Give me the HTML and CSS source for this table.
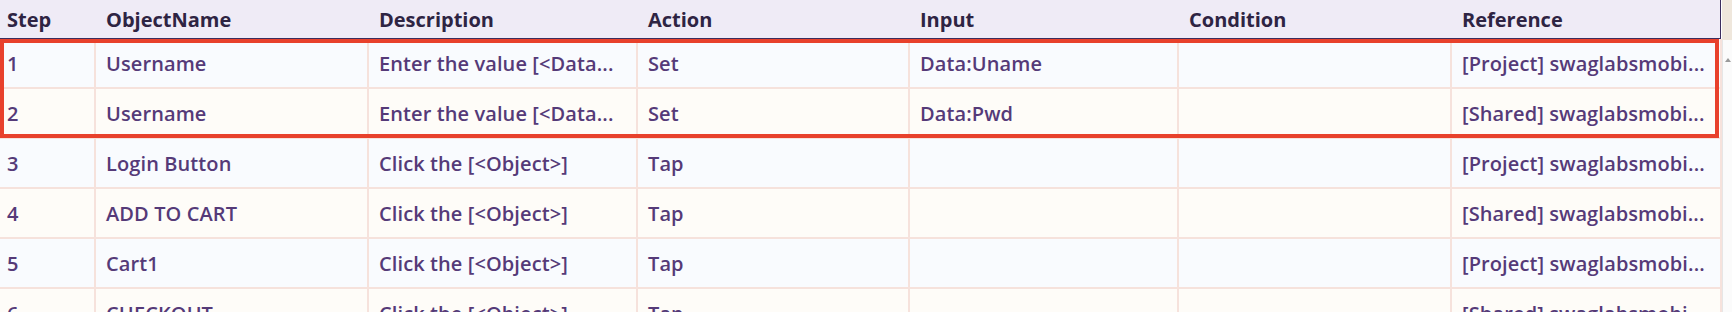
FILE: index.html
```html
<!DOCTYPE html>
<html>
<head>
<meta charset="utf-8">
<link rel="stylesheet" href="styles.css">
</head>
<body>
<div class="page">
  <div class="grid-wrap">
    <div class="grid">
      <div class="row head">
        <div class="cell c-step">Step</div>
        <div class="cell">ObjectName</div>
        <div class="cell">Description</div>
        <div class="cell">Action</div>
        <div class="cell">Input</div>
        <div class="cell">Condition</div>
        <div class="cell">Reference</div>
      </div>
      <div class="row odd">
        <div class="cell c-step">1</div>
        <div class="cell">Username</div>
        <div class="cell">Enter the value [&lt;Data...</div>
        <div class="cell">Set</div>
        <div class="cell">Data:Uname</div>
        <div class="cell"></div>
        <div class="cell">[Project] swaglabsmobi...</div>
      </div>
      <div class="row even">
        <div class="cell c-step">2</div>
        <div class="cell">Username</div>
        <div class="cell">Enter the value [&lt;Data...</div>
        <div class="cell">Set</div>
        <div class="cell">Data:Pwd</div>
        <div class="cell"></div>
        <div class="cell">[Shared] swaglabsmobi...</div>
      </div>
      <div class="row odd">
        <div class="cell c-step">3</div>
        <div class="cell">Login Button</div>
        <div class="cell">Click the [&lt;Object&gt;]</div>
        <div class="cell">Tap</div>
        <div class="cell"></div>
        <div class="cell"></div>
        <div class="cell">[Project] swaglabsmobi...</div>
      </div>
      <div class="row even">
        <div class="cell c-step">4</div>
        <div class="cell">ADD TO CART</div>
        <div class="cell">Click the [&lt;Object&gt;]</div>
        <div class="cell">Tap</div>
        <div class="cell"></div>
        <div class="cell"></div>
        <div class="cell">[Shared] swaglabsmobi...</div>
      </div>
      <div class="row odd">
        <div class="cell c-step">5</div>
        <div class="cell">Cart1</div>
        <div class="cell">Click the [&lt;Object&gt;]</div>
        <div class="cell">Tap</div>
        <div class="cell"></div>
        <div class="cell"></div>
        <div class="cell">[Project] swaglabsmobi...</div>
      </div>
      <div class="row even">
        <div class="cell c-step">6</div>
        <div class="cell">CHECKOUT</div>
        <div class="cell">Click the [&lt;Object&gt;]</div>
        <div class="cell">Tap</div>
        <div class="cell"></div>
        <div class="cell"></div>
        <div class="cell">[Shared] swaglabsmobi...</div>
      </div>
    </div>
    <div class="highlight"></div>
  </div>
  <div class="scroll">
    <div class="scroll-top"></div>
    <div class="scroll-track"><span class="scroll-arrow"></span></div>
  </div>
</div>
</body>
</html>
```
FILE: styles.css
```css
html, body {
  margin: 0;
  padding: 0;
  background: #ffffff;
  overflow: hidden;
}
.page {
  display: flex;
  width: 1732px;
  height: 312px;
  font-family: "Open Sans", "Noto Sans", sans-serif;
}
.grid-wrap {
  position: relative;
  width: 1722px;
  flex: none;
}
.row {
  display: grid;
  grid-template-columns: 96px 273px 269px 272px 269px 273px 270px;
}
.cell {
  box-sizing: border-box;
  height: 50px;
  padding: 0 0 0 10px;
  display: flex;
  align-items: center;
  white-space: nowrap;
  overflow: hidden;
  font-size: 20px;
  font-weight: 600;
  letter-spacing: 0.1px;
  color: #553a78;
  border-right: 2px solid #f6e2dc;
  border-bottom: 2px solid #f6e2dc;
}
.c-step {
  padding-left: 7px;
}
.odd .cell { background: #f9fbfe; }
.even .cell { background: #fefcf8; }
.head {
  background: #efebf6;
  border-bottom: 1px solid #3b2d5e;
  border-right: 1px solid #3b2d5e;
  width: 1721px;
  box-sizing: border-box;
}
.head .cell {
  height: 38px;
  border: none;
  background: transparent;
  color: #2e2443;
  font-weight: 700;
  letter-spacing: 0;
}
.highlight {
  position: absolute;
  left: 0;
  top: 39px;
  width: 1719px;
  height: 99px;
  box-sizing: border-box;
  border: 4px solid #e8412c;
  pointer-events: none;
}
.scroll {
  width: 10px;
  flex: none;
  display: flex;
  flex-direction: column;
}
.scroll-top {
  height: 40px;
  background: #efe7dc;
}
.scroll-track {
  flex: 1;
  background: #fbfbfb;
  border-left: 1px solid #e6e6e6;
  position: relative;
}
.scroll-arrow {
  position: absolute;
  left: 2px;
  top: 18px;
  width: 0;
  height: 0;
  border-left: 3px solid transparent;
  border-right: 3px solid transparent;
  border-bottom: 4px solid #9a9a9a;
}
```
